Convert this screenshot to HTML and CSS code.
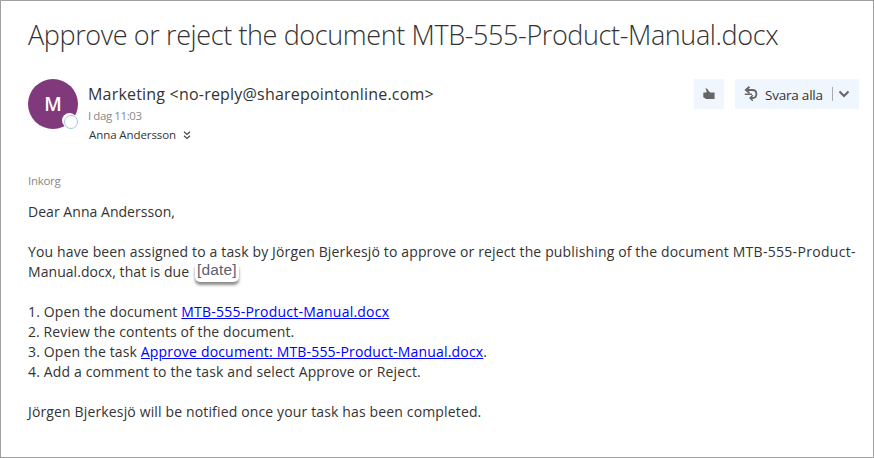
FILE: index.html
```
<!DOCTYPE html>
<html lang="sv">
<head>
<meta charset="utf-8">
<title>Marketing</title>
<link rel="stylesheet" href="styles.css">
</head>
<body>
<article class="mail">
  <h1 class="subject">Approve or reject the document MTB-555-Product-Manual.docx</h1>
  <header class="header">
    <div class="avatar">M<span class="presence"></span></div>
    <div class="meta">
      <div class="sender">Marketing &lt;no-reply@sharepointonline.com&gt;</div>
      <div class="time">I dag 11:03</div>
      <div class="recipient"><span>Anna Andersson</span>
        <svg class="expand" viewBox="0 0 8 9"><path d="M1 .8l3 2.700L7 .8M1 4.800l3 2.700L7 4.800"/></svg>
      </div>
    </div>
    <div class="actions">
      <button class="btn like" aria-label="Gilla"><svg viewBox="0 0 12 12"><path d="M2.600 0.300C3.600 0 4.500 1 5.200 2.300L7 4.500H11.600V10.900H3.200L0.300 9.200V4.800L3.800 4.300Z"/></svg></button>
      <div class="btn reply">
        <svg class="reply-icon" viewBox="0 0 14 16"><path d="M5.500 .8L1.800 4l3.700 3M1.800 4H8.500C13.700 4 13.700 12 8.500 12H6.500"/><path d="M.8 8.300H8M8.800 9.300L6 12l2.800 2.800" stroke-width="1.400"/></svg>
        <span class="label">Svara alla</span>
        <span class="divider"></span>
        <svg class="chevron" viewBox="0 0 12 8"><path d="M1.500 1.500L6 6l4.500-4.500"/></svg>
      </div>
    </div>
  </header>
  <div class="folder">Inkorg</div>
  <div class="body">
    <p class="greeting">Dear Anna Andersson,</p>
    <p>You have been assigned to a task by Jörgen Bjerkesjö to approve or reject the publishing of the document <span class="doc">MTB-555-Product-</span><br><span class="due">Manual.docx, that is due</span> <span class="date">[date]</span></p>
    <p>1. Open the document <a class="doc-link">MTB-555-Product-Manual.docx</a><br><span class="step">2. Review the contents of the document.</span><br>3. Open the task <a class="task-link">Approve document: MTB-555-Product-Manual.docx</a>.<br>4. Add a comment to the task and select Approve or Reject.</p>
    <p>Jörgen Bjerkesjö will be notified once your task has been completed.</p>
  </div>
</article>
</body>
</html>
```
FILE: styles.css
```
* { box-sizing: border-box; }
body { margin: 0; background: #fff; color: #333; font-family: "Open Sans", "Noto Sans", sans-serif; }
.mail { height: 458px; border: 1px solid #a0a0a0; padding: 14px 14px 0 27px; overflow: hidden; }
.subject { margin: 0; height: 64px; font-size: 27px; line-height: 39px; font-weight: 300; letter-spacing: -0.39px; white-space: nowrap; }
.header { display: flex; height: 90px; }
.avatar { position: relative; width: 50px; height: 50px; border-radius: 50%; background: #80397b; color: #fff; font-size: 19px; font-weight: 600; line-height: 51px; text-align: center; }
.presence { position: absolute; left: 34px; top: 34px; width: 15px; height: 15px; padding: 1.5px; border-radius: 50%; background: #fff; }
.presence::after { content: ""; display: block; width: 12px; height: 12px; border: 1px solid #a5c8d5; border-radius: 50%; }
.meta { flex: 1; margin-left: 10px; white-space: nowrap; }
.sender { height: 27px; font-size: 16px; line-height: 30px; letter-spacing: 0.2px; }
.time { height: 19px; font-size: 11.5px; line-height: 20px; letter-spacing: -0.42px; color: #888; }
.recipient { display: flex; align-items: center; gap: 7px; height: 20px; padding-left: 1px; font-size: 11.5px; line-height: 20px; letter-spacing: -0.08px; }
.expand { width: 8px; height: 9px; margin-top: 1px; fill: none; stroke: #444; stroke-width: 1.2; }
.actions { display: flex; gap: 11px; }
.btn { display: flex; align-items: center; height: 30px; border: 0; padding: 0; background: #eff6fd; }
.like { width: 30px; justify-content: center; }
.like svg { width: 12px; height: 12px; fill: #666; }
.reply { width: 124px; padding-left: 9px; font-size: 13.5px; letter-spacing: -0.22px; }
.reply-icon { width: 14px; height: 16px; fill: none; stroke: #666; stroke-width: 1.8; }
.label { width: 59px; margin: 2px 0 0 7px; white-space: nowrap; }
.divider { width: 1px; height: 14px; margin-left: 8px; background: #aaa; }
.chevron { width: 12px; height: 8px; margin-left: 5px; fill: none; stroke: #666; stroke-width: 2; }
.folder { height: 31px; margin-top: 2px; font-size: 11.5px; line-height: 20px; letter-spacing: -0.28px; color: #888; }
.body { font-size: 14px; line-height: 20px; letter-spacing: 0.145px; white-space: nowrap; }
.body p { margin: 0 0 20px; }
.body .greeting { letter-spacing: 0.04px; }
.body a { color: #00f; text-decoration: underline; }
.doc { letter-spacing: 0.3px; }
.doc-link { letter-spacing: 0.226px; }
.task-link { letter-spacing: 0.178px; }
.due { letter-spacing: 0.06px; }
.step { letter-spacing: 0.1px; }
.date { display: inline-block; height: 20px; margin: 0 0 0 2px; padding: 0 2px; border-radius: 5px; background: #fff; box-shadow: 0 3px 3px rgba(0, 0, 0, 0.45); color: #5d6075; font-family: "Liberation Sans", Arial, sans-serif; font-size: 15.5px; line-height: 16px; letter-spacing: 0.2px; vertical-align: top; }
```
